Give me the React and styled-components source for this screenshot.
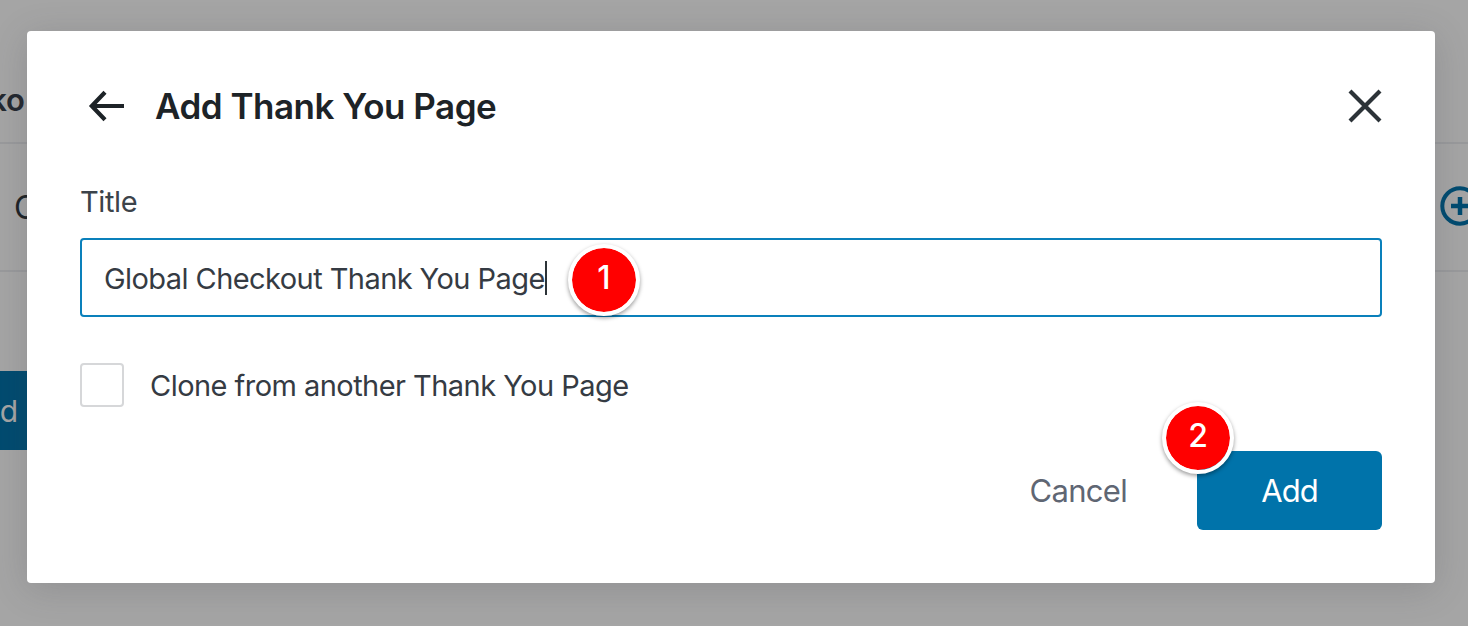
import React, { useState } from 'react'
import styled, { createGlobalStyle } from 'styled-components'

export default function App() {
    const [cloned, setCloned] = useState(false)
    const title = "Global Checkout Thank You Page"

    return (
        <>
            <GlobalStyle />
            <Page>
                <Row $height="144px">
                    <Heading>ko</Heading>
                </Row>
                <Row $height="128px">
                    <StepName>C</StepName>
                    <AddStep aria-label="Add step">
                        <svg width="40" height="40" viewBox="0 0 40 40" fill="none" stroke="#004b70">
                            <circle cx="20" cy="20" r="17.7" strokeWidth="4" />
                            <path d="M20 11v18M11 20h18" strokeWidth="4.5" />
                        </svg>
                    </AddStep>
                </Row>
                <Footer>
                    <PageButton>d</PageButton>
                </Footer>

                <Modal>
                    <ModalHeader>
                        <IconButton aria-label="Back">
                            <svg width="36" height="32" viewBox="0 0 36 32" fill="none" stroke="#1d2327" strokeWidth="4.2">
                                <path d="M36 16H4M17 2.2L3.8 16L17 29.8" />
                            </svg>
                        </IconButton>
                        <ModalTitle>Add Thank You Page</ModalTitle>
                        <CloseButton aria-label="Close">
                            <svg width="34" height="34" viewBox="0 0 34 34" fill="none" stroke="#2c3338" strokeWidth="4.2">
                                <path d="M2 2l30 30M32 2L2 32" />
                            </svg>
                        </CloseButton>
                    </ModalHeader>

                    <Label>Title</Label>
                    <Field>
                        <FieldText>{title}</FieldText>
                        <Caret />
                        <Marker $left="486px" $top="4px">1</Marker>
                    </Field>

                    <CheckRow onClick={() => setCloned(!cloned)}>
                        <Checkbox role="checkbox" aria-checked={cloned} />
                        <CheckLabel>Clone from another Thank You Page</CheckLabel>
                    </CheckRow>

                    <Actions>
                        <CancelButton>Cancel</CancelButton>
                        <AddButton>
                            <span>Add</span>
                            <Marker $left="-35px" $top="-49px">2</Marker>
                        </AddButton>
                    </Actions>
                </Modal>
            </Page>
        </>
    )
}

const GlobalStyle = createGlobalStyle`
  * {
    box-sizing: border-box;
  }
  body {
    margin: 0;
    font-family: Inter, sans-serif;
  }
  button {
    font-family: inherit;
    border: none;
    padding: 0;
    cursor: pointer;
  }
`;

const Page = styled.div`
  position: relative;
  width: 1468px;
  height: 626px;
  overflow: hidden;
  background-color: #a5a5a5;
`;

const Row = styled.div`
  display: flex;
  justify-content: space-between;
  align-items: center;
  height: ${(props) => props.$height};
  border-bottom: 2px solid #999a9c;
`;

const Heading = styled.div`
  display: flex;
  justify-content: flex-end;
  width: 25px;
  padding-top: 58px;
  font-size: 31px;
  font-weight: 600;
  line-height: 40px;
  color: #23282f;
`;

const StepName = styled.div`
  padding: 2px 0 0 14px;
  font-size: 32px;
  line-height: 40px;
  color: #1d2327;
`;

const AddStep = styled.button`
  display: flex;
  margin: 0 -12px 2px 0;
  background: none;
`;

const Footer = styled.div`
  padding-top: 99px;
`;

const PageButton = styled.div`
  display: flex;
  justify-content: flex-end;
  align-items: center;
  width: 28px;
  height: 79px;
  padding-right: 10px;
  background-color: #004b70;
  color: #a5a5a5;
  font-size: 30px;
`;

const Modal = styled.div`
  position: absolute;
  top: 31px;
  left: 27px;
  width: 1408px;
  height: 552px;
  padding: 53px;
  border-radius: 4px;
  background-color: #ffffff;
  box-shadow: 0 6px 36px rgba(60, 60, 70, 0.2);
`;

const ModalHeader = styled.div`
  display: flex;
  align-items: center;
  height: 44px;
  padding-left: 8px;
`;

const IconButton = styled.button`
  display: flex;
  background: none;
`;

const CloseButton = styled(IconButton)`
  margin: 0 0 1px;
`;

const ModalTitle = styled.h2`
  flex: 1;
  margin: 0 0 0 31px;
  font-size: 35px;
  font-weight: 600;
  line-height: 44px;
  letter-spacing: -0.5px;
  color: #1d2327;
`;

const Label = styled.div`
  margin-top: 54px;
  font-size: 29px;
  line-height: 40px;
  letter-spacing: -0.4px;
  color: #3c434a;
`;

const Field = styled.div`
  position: relative;
  display: flex;
  align-items: center;
  height: 79px;
  margin-top: 16px;
  padding: 0 22px;
  border: 2px solid #0a80bb;
  border-radius: 4px;
`;

const FieldText = styled.span`
  padding-top: 2px;
  font-size: 29px;
  line-height: 40px;
  letter-spacing: -0.57px;
  color: #353b43;
  white-space: nowrap;
`;

const Caret = styled.span`
  width: 2px;
  height: 34px;
  background-color: #2c3338;
`;

const Marker = styled.span`
  position: absolute;
  top: ${(props) => props.$top};
  left: ${(props) => props.$left};
  display: flex;
  justify-content: center;
  align-items: center;
  width: 72px;
  height: 72px;
  padding-bottom: 4px;
  border: 4px solid #ffffff;
  border-radius: 50%;
  background-color: #ff0000;
  background-clip: padding-box;
  box-shadow: 0 2px 4px rgba(0, 0, 0, 0.4);
  color: #ffffff;
  font-size: 32px;
  font-weight: 500;
  line-height: 36px;
  letter-spacing: 0;
`;

const CheckRow = styled.div`
  display: flex;
  align-items: center;
  gap: 26px;
  margin-top: 46px;
`;

const Checkbox = styled.span`
  width: 44px;
  height: 44px;
  border: 2px solid #d6d7d9;
  border-radius: 4px;
`;

const CheckLabel = styled.span`
  padding-top: 2px;
  font-size: 29px;
  line-height: 40px;
  letter-spacing: -0.54px;
  color: #353b43;
`;

const Actions = styled.div`
  display: flex;
  justify-content: flex-end;
  align-items: center;
  gap: 70px;
  margin-top: 44px;
`;

const CancelButton = styled.button`
  background: none;
  color: #5f6673;
  font-size: 31px;
  line-height: 40px;
  letter-spacing: -0.7px;
`;

const AddButton = styled.button`
  position: relative;
  width: 185px;
  height: 79px;
  border-radius: 6px;
  background-color: #0073aa;
  color: #ffffff;
  font-size: 31px;
  letter-spacing: -0.9px;
`;
